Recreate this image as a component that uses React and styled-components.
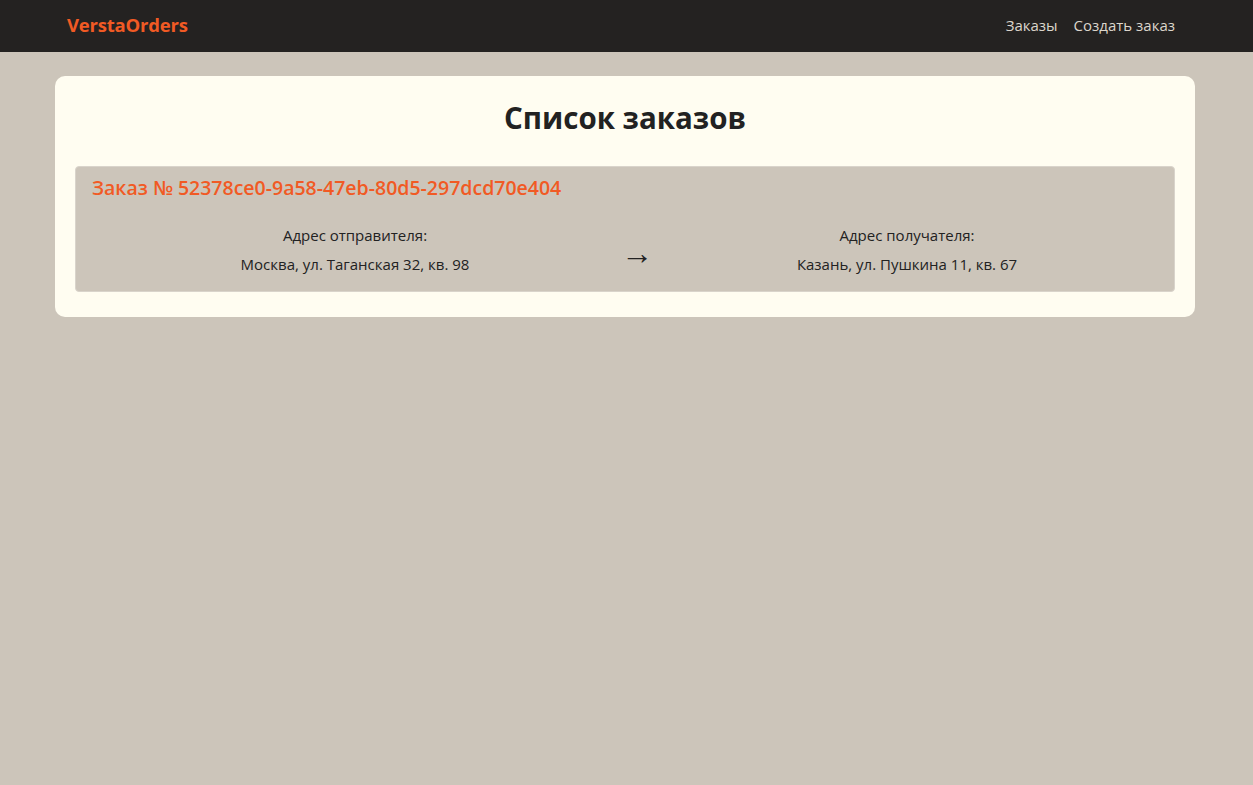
import React from "react";
import styled, { createGlobalStyle } from "styled-components";

const Global = createGlobalStyle`
  html, body { margin: 0; padding: 0; }
  body {
    background: #ccc5ba;
    font-family: "Open Sans", "Noto Sans", sans-serif;
    color: #222;
    min-height: 785px;
  }
`;

const Navbar = styled.header`
  background: #242221;
  height: 52px;
`;

const NavInner = styled.div`
  width: 1140px;
  margin-left: calc(50% - 571.5px);
  padding: 0 12px;
  box-sizing: border-box;
  height: 100%;
  display: flex;
  align-items: center;
  justify-content: space-between;
`;

const Brand = styled.a`
  color: #f15a24;
  font-weight: 700;
  font-size: 18.5px;
  letter-spacing: -0.2px;
  text-decoration: none;
  margin-top: -3px;
`;

const NavLinks = styled.nav`
  display: flex;
  margin-top: -3px;
`;

const NavLink = styled.a`
  color: #dcd6cc;
  font-size: 15px;
  padding: 8px;
  text-decoration: none;
`;

const Main = styled.main`
  width: 1140px;
  margin: 24px 0 0 calc(50% - 571.5px);
`;

const Card = styled.section`
  background: #fffdf1;
  border-radius: 10px;
  padding: 20px 20px 25px;
`;

const Title = styled.h1`
  margin: 0 0 26px;
  text-align: center;
  font-size: 29.5px;
  font-weight: 700;
  line-height: 44px;
  color: #222;
`;

const Order = styled.article`
  background: #ccc5ba;
  border: 1px solid #d9d4cb;
  border-radius: 4px;
  padding: 8px 16px 16px;
`;

const OrderTitle = styled.h2`
  margin: 0 0 23px;
  color: #f15a24;
  font-size: 19.5px;
  font-weight: 600;
  line-height: 26px;
`;

const Route = styled.div`
  display: grid;
  grid-template-columns: 526px 38px 1fr;
  align-items: center;
`;

const Address = styled.div`
  text-align: center;
  font-size: 15px;
  line-height: 22px;
`;

const Label = styled.div`
  margin-bottom: 7px;
`;

const Arrow = styled.div`
  text-align: center;
  font-size: 32px;
  line-height: 30px;
  padding-top: 4px;
`;

export default function App() {
  return (
    <>
      <Global />
      <Navbar>
        <NavInner>
          <Brand href="#">VerstaOrders</Brand>
          <NavLinks>
            <NavLink href="#">Заказы</NavLink>
            <NavLink href="#">Создать заказ</NavLink>
          </NavLinks>
        </NavInner>
      </Navbar>
      <Main>
        <Card>
          <Title>Список заказов</Title>
          <Order>
            <OrderTitle>Заказ № 52378ce0-9a58-47eb-80d5-297dcd70e404</OrderTitle>
            <Route>
              <Address>
                <Label>Адрес отправителя:</Label>
                <div>Москва, ул. Таганская 32, кв. 98</div>
              </Address>
              <Arrow>→</Arrow>
              <Address>
                <Label>Адрес получателя:</Label>
                <div>Казань, ул. Пушкина 11, кв. 67</div>
              </Address>
            </Route>
          </Order>
        </Card>
      </Main>
    </>
  );
}
